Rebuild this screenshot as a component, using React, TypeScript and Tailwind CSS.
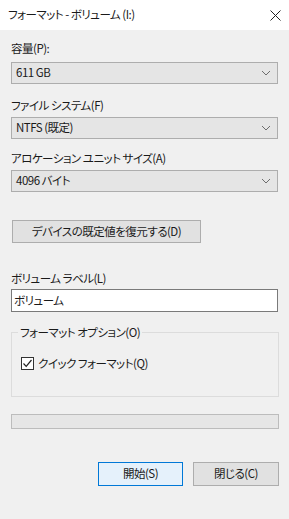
function Combo({ value }: { value: string }) {
  return (
    <div className="h-[22px] border border-[#adadad] bg-[#e5e5e5] flex items-center justify-between pl-[4px] pr-[6px]">
      <span>{value}</span>
      <svg width="10" height="6" viewBox="0 0 10 6" fill="none">
        <path d="M1 1 L5 5 L9 1" stroke="#6d6d6d" strokeWidth="1" />
      </svg>
    </div>
  )
}

function Label({ text }: { text: string }) {
  return <div className="h-[16px] leading-[16px]">{text}</div>
}

export default function App() {
  return (
    <div className="w-[289px] h-[519px] bg-[#f0f0f0] text-[11.5px] tracking-[-0.5px] text-[#1a1a1a] overflow-hidden font-['Noto_Sans_CJK_JP','Noto_Sans',sans-serif] [font-feature-settings:'palt']">
      <div className="h-[30px] bg-white flex items-center justify-between pl-[8px] pr-[8px]">
        <span>フォーマット - ボリューム (I:)</span>
        <svg width="11" height="11" viewBox="0 0 11 11" fill="none">
          <path d="M0.5 0.5 L10.5 10.5 M10.5 0.5 L0.5 10.5" stroke="#222" strokeWidth="1" />
        </svg>
      </div>

      <div className="px-[11px] flex flex-col">
        <div className="mt-[10px]">
          <Label text="容量(P):" />
        </div>
        <div className="mt-[6px]">
          <Combo value="611 GB" />
        </div>

        <div className="mt-[13px]">
          <Label text="ファイル システム(F)" />
        </div>
        <div className="mt-[4px]">
          <Combo value="NTFS (既定)" />
        </div>

        <div className="mt-[11px]">
          <Label text="アロケーション ユニット サイズ(A)" />
        </div>
        <div className="mt-[4px]">
          <Combo value="4096 バイト" />
        </div>

        <button className="mt-[28px] ml-[1px] w-[189px] h-[23px] border border-[#adadad] bg-[#e1e1e1] text-center">
          デバイスの既定値を復元する(D)
        </button>

        <div className="mt-[27px]">
          <Label text="ボリューム ラベル(L)" />
        </div>
        <div className="mt-[3px] h-[23px] border border-[#7a7a7a] bg-white flex items-center pl-[2px]">
          ボリューム
        </div>

        <div className="mt-[20px] relative h-[65px] border border-[#dcdcdc] w-[268px]">
          <span className="absolute left-[6px] top-[-9px] bg-[#f0f0f0] px-[2px] leading-[16px]">
            フォーマット オプション(O)
          </span>
          <div className="mt-[22px] ml-[9px] flex items-center gap-[4px]">
            <div className="w-[13px] h-[13px] border border-[#333] bg-white flex items-center justify-center">
              <svg width="11" height="11" viewBox="0 0 11 11" fill="none">
                <path d="M1.5 5.5 L4.2 8.3 L9.5 2" stroke="#222" strokeWidth="1.2" />
              </svg>
            </div>
            <span className="leading-[16px]">クイック フォーマット(Q)</span>
          </div>
        </div>

        <div className="mt-[17px] h-[15px] w-[268px] border border-[#bcbcbc] bg-[#e6e6e6]" />

        <div className="mt-[33px] flex justify-end gap-[10px] w-[268px]">
          <button className="w-[85px] h-[24px] border border-[#0078d7] bg-[#e5f1fb]">開始(S)</button>
          <button className="w-[86px] h-[24px] border border-[#adadad] bg-[#e1e1e1]">閉じる(C)</button>
        </div>
      </div>
    </div>
  )
}
